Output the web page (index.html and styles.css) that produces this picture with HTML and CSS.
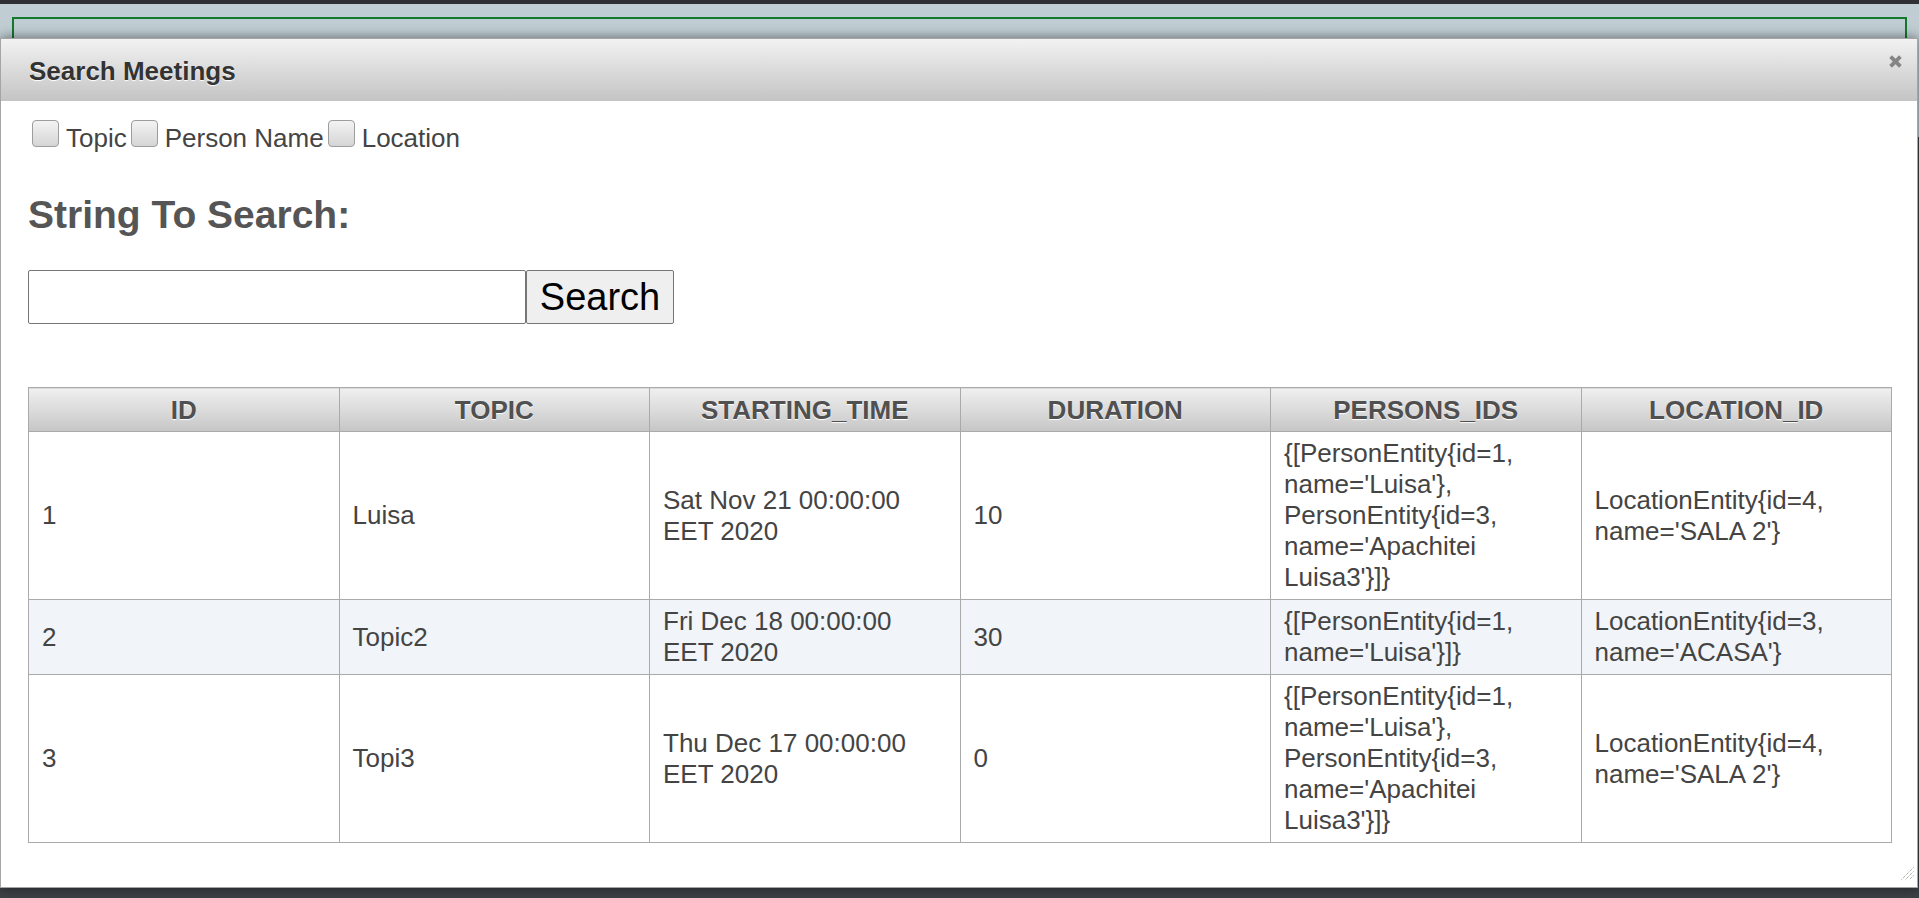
FILE: index.html
```html
<!DOCTYPE html>
<html lang="en">
<head>
<meta charset="utf-8">
<title>Search Meetings</title>
<link rel="stylesheet" href="styles.css">
</head>
<body>
<div class="topbar"></div>
<div class="backdrop"><div class="frame"></div></div>

<div class="dialog" role="dialog" aria-labelledby="dlg-title">
  <div class="titlebar">
    <span class="title" id="dlg-title">Search Meetings</span>
    <button class="close" type="button" aria-label="Close">
      <svg width="15" height="15" viewBox="0 0 15 15" aria-hidden="true"><path d="M2.6 2.6 L12.4 12.4 M12.4 2.6 L2.6 12.4" stroke="#858585" stroke-width="3.8" fill="none"/></svg>
    </button>
  </div>
  <div class="content">
    <div class="options"><label class="opt"><input class="cb" type="checkbox">Topic</label><label class="opt"><input class="cb" type="checkbox">Person Name</label><label class="opt"><input class="cb" type="checkbox">Location</label></div>
    <h2 class="heading">String To Search:</h2>
    <div class="search"><input class="field" type="text"><button class="btn" type="button">Search</button></div>
    <table class="grid">
      <thead>
        <tr><th>ID</th><th>TOPIC</th><th>STARTING_TIME</th><th>DURATION</th><th>PERSONS_IDS</th><th>LOCATION_ID</th></tr>
      </thead>
      <tbody>
        <tr>
          <td>1</td><td>Luisa</td><td>Sat Nov 21 00:00:00 EET 2020</td><td>10</td>
          <td>{[PersonEntity{id=1, name='Luisa'}, PersonEntity{id=3, name='Apachitei Luisa3'}]}</td>
          <td>LocationEntity{id=4, name='SALA 2'}</td>
        </tr>
        <tr class="alt">
          <td>2</td><td>Topic2</td><td>Fri Dec 18 00:00:00 EET 2020</td><td>30</td>
          <td>{[PersonEntity{id=1, name='Luisa'}]}</td>
          <td>LocationEntity{id=3, name='ACASA'}</td>
        </tr>
        <tr>
          <td>3</td><td>Topi3</td><td>Thu Dec 17 00:00:00 EET 2020</td><td>0</td>
          <td>{[PersonEntity{id=1, name='Luisa'}, PersonEntity{id=3, name='Apachitei Luisa3'}]}</td>
          <td>LocationEntity{id=4, name='SALA 2'}</td>
        </tr>
      </tbody>
    </table>
  </div>
  <span class="grip" aria-hidden="true">
    <svg width="13" height="13" viewBox="0 0 13 13"><path d="M12.5 0.5 L0.5 12.5 M12.5 4.5 L4.5 12.5 M12.5 8.5 L8.5 12.5" stroke="#8f8f8f" stroke-width="1" stroke-dasharray="1 1" fill="none"/></svg>
  </span>
</div>
</body>
</html>
```

FILE: styles.css
```css
html, body {
  margin: 0;
  height: 100%;
  overflow: hidden;
}

body {
  background: #3e4247;
  font-family: "Liberation Sans", Arial, sans-serif;
  color: #444;
}

.topbar {
  height: 4px;
  background: #2e3033;
}

.backdrop {
  background: #c0ced4;
  padding: 13px 12px 0;
  height: 120px;
}

.frame {
  border: 2px solid #137a2c;
  height: 200px;
}

.dialog {
  position: absolute;
  top: 38px;
  left: 0;
  width: 1918px;
  height: 850px;
  box-sizing: border-box;
  background: #fff;
  border: 1px solid #a5a5a5;
  box-shadow: 0 0 12px rgba(0, 0, 0, 0.55);
}

.titlebar {
  display: flex;
  justify-content: space-between;
  align-items: flex-start;
  padding: 17px 14px 15px 28px;
  background: linear-gradient(#f2f2f2, #c4c4c4);
}

.title {
  font-size: 26px;
  line-height: 30px;
  font-weight: bold;
  color: #333;
  text-shadow: 0 1px 1px #fff;
}

.close {
  border: 0;
  padding: 0;
  margin: -2px 0 0;
  background: none;
  width: 15px;
  height: 15px;
  display: flex;
}

.content {
  padding: 19px 25px 0 27px;
}

.options {
  font-size: 26px;
  line-height: 31px;
  color: #444;
}

.opt {
  white-space: nowrap;
}

.cb {
  appearance: none;
  -webkit-appearance: none;
  display: inline-block;
  width: 27px;
  height: 27px;
  margin: 0 7px 0 4px;
  box-sizing: border-box;
  border: 1px solid #9d9d9d;
  border-radius: 4px;
  background: linear-gradient(#f3f3f3, #d5d5d5);
  vertical-align: baseline;
}

.heading {
  margin: 38px 0 33px;
  font-size: 39px;
  line-height: 45px;
  font-weight: bold;
  color: #555;
}

.search {
  display: flex;
  height: 54px;
}

.field {
  width: 498px;
  box-sizing: border-box;
  margin: 0;
  border: 1px solid #767676;
  border-radius: 2px;
  font-size: 26px;
  font-family: "Liberation Sans", Arial, sans-serif;
  padding: 0 4px;
  background: #fff;
}

.btn {
  width: 148px;
  box-sizing: border-box;
  margin: 0;
  border: 1px solid #767676;
  border-radius: 2px;
  background: #efefef;
  color: #000;
  font-family: "Liberation Sans", Arial, sans-serif;
  font-size: 38px;
  padding: 0 12px;
}

.grid {
  margin-top: 63px;
  width: 100%;
  table-layout: fixed;
  border-collapse: collapse;
  border: 1px solid #aaa;
  font-size: 26px;
}

.grid th {
  padding: 7px 13px 6px;
  line-height: 30px;
  font-weight: bold;
  color: #505050;
  text-shadow: 0 1px 1px #fff;
  border: 1px solid #aaa;
  background: linear-gradient(#f0f0f0, #c6c6c6);
  text-align: center;
}

.grid td {
  padding: 6px 13px;
  line-height: 31px;
  color: #444;
  border: 1px solid #aaa;
  vertical-align: middle;
  text-align: left;
}

.grid tr.alt td {
  background: #f1f4f8;
}

.grip {
  position: absolute;
  right: 3px;
  bottom: 7px;
  width: 13px;
  height: 13px;
  display: flex;
}
```
